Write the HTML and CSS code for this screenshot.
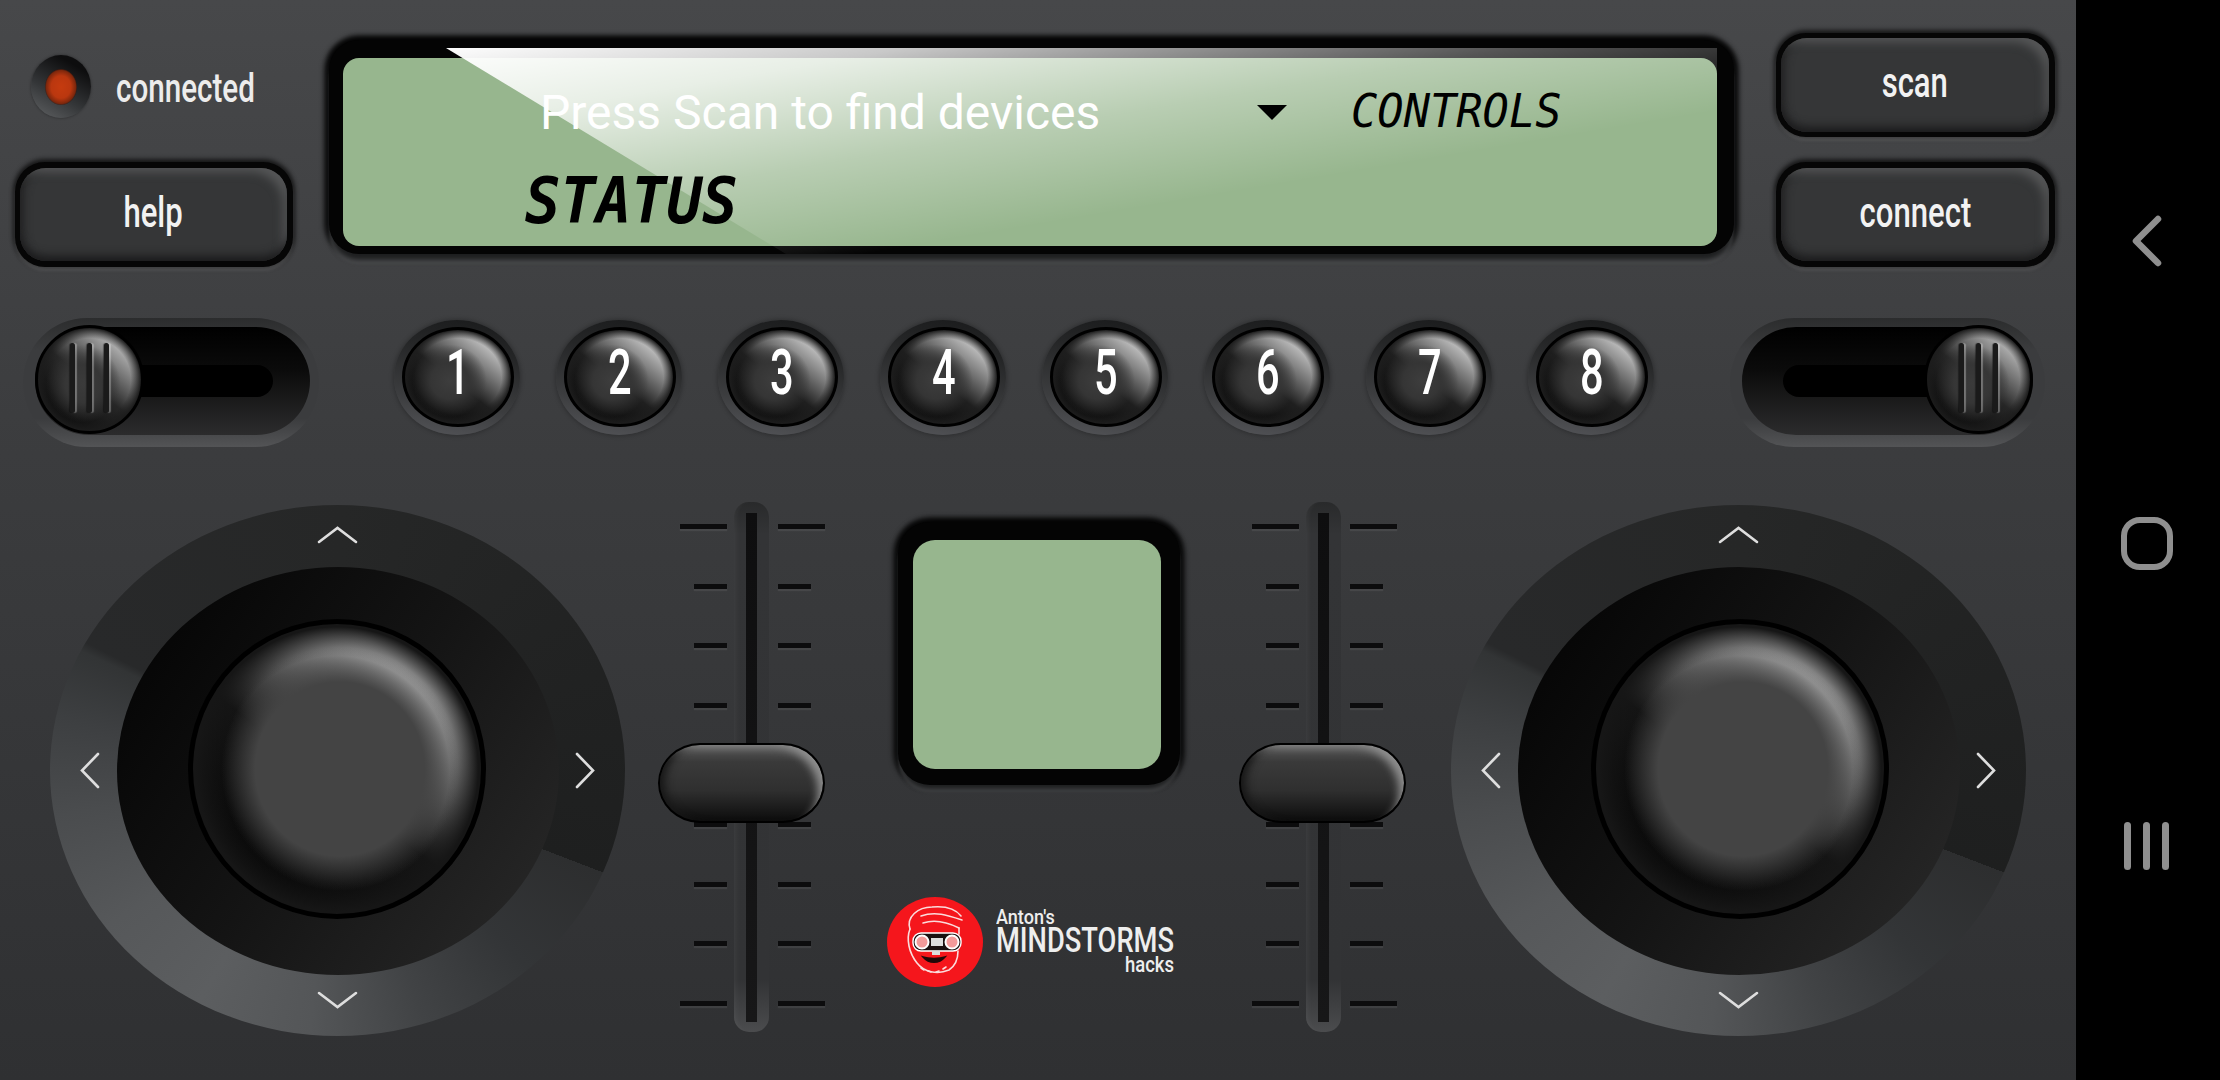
FILE: index.html
```html
<!DOCTYPE html>
<html lang="en">
<head>
<meta charset="utf-8">
<title>Mindstorms remote</title>
<link rel="stylesheet" href="styles.css">
</head>
<body>
<main class="panel">
  <section class="top-row">
    <div class="side-col left-col">
      <div class="status">
        <span class="led"><span class="led-dot"></span></span>
        <span class="status-text">connected</span>
      </div>
      <div class="well well-tall"><button class="btn"><span class="cond">help</span></button></div>
    </div>
    <div class="lcd">
      <div class="lcd-screen">
        <div class="lcd-row">
          <span class="device">Press Scan to find devices</span>
          <span class="caret"></span>
          <span class="seg-thin">CONTROLS</span>
        </div>
        <div class="seg-bold">STATUS</div>
      </div>
      <div class="glare"></div>
    </div>
    <div class="side-col right-col">
      <div class="well"><button class="btn"><span class="cond">scan</span></button></div>
      <div class="well well-tall"><button class="btn"><span class="cond">connect</span></button></div>
    </div>
  </section>

  <section class="mid-row">
    <div class="toggle toggle-left">
      <div class="toggle-well"><span class="toggle-slot"></span></div>
      <div class="toggle-knob"><i></i><i></i><i></i></div>
    </div>
    <div class="numbers">
      <div class="num-hole"><button class="num"><span class="cond-num">1</span></button></div>
      <div class="num-hole"><button class="num"><span class="cond-num">2</span></button></div>
      <div class="num-hole"><button class="num"><span class="cond-num">3</span></button></div>
      <div class="num-hole"><button class="num"><span class="cond-num">4</span></button></div>
      <div class="num-hole"><button class="num"><span class="cond-num">5</span></button></div>
      <div class="num-hole"><button class="num"><span class="cond-num">6</span></button></div>
      <div class="num-hole"><button class="num"><span class="cond-num">7</span></button></div>
      <div class="num-hole"><button class="num"><span class="cond-num">8</span></button></div>
    </div>
    <div class="toggle toggle-right">
      <div class="toggle-well"><span class="toggle-slot"></span></div>
      <div class="toggle-knob"><i></i><i></i><i></i></div>
    </div>
  </section>

  <section class="bottom-row">
    <div class="joy">
      <svg class="chev chev-up" viewBox="0 0 41 19"><polyline points="2,17 20.5,3 39,17"/></svg>
      <svg class="chev chev-down" viewBox="0 0 41 19"><polyline points="2,2 20.5,16 39,2"/></svg>
      <svg class="chev chev-left" viewBox="0 0 21 37"><polyline points="19,2 3,18.5 19,35"/></svg>
      <svg class="chev chev-right" viewBox="0 0 21 37"><polyline points="2,2 18,18.5 2,35"/></svg>
      <div class="joy-pit"><div class="joy-knob"></div></div>
    </div>

    <div class="fader fader-left">
      <div class="ticks ticks-l">
        <i class="long"></i><i></i><i></i><i></i><i></i><i></i><i></i><i></i><i class="long"></i>
      </div>
      <div class="groove"><span class="groove-slot"></span></div>
      <div class="ticks ticks-r">
        <i class="long"></i><i></i><i></i><i></i><i></i><i></i><i></i><i></i><i class="long"></i>
      </div>
      <div class="thumb"></div>
    </div>

    <div class="center-col">
      <div class="mini-lcd"><div class="mini-screen"></div></div>
      <div class="logo">
        <div class="logo-badge">
          <svg viewBox="0 0 96 90">
            <g class="face-line">
              <path d="M23 32C19 20 31 10 45 10C56 9 68 11 74 19"/>
              <path d="M34 19C48 14 60 18 75 23"/>
              <path d="M36 26C48 22 60 25 72 31"/>
              <path d="M72 31V37"/>
              <path d="M23 32C19 42 22 56 30 66C37 75 50 78 62 73C68 69 71 62 71 54"/>
            </g>
            <rect class="goggle" x="26" y="36" width="48" height="18" rx="8"/>
            <circle class="eye" cx="35" cy="45" r="6.5"/>
            <circle class="eye" cx="65" cy="45" r="6.5"/>
            <rect class="goggle-mid" x="44" y="41" width="12" height="8"/>
            <rect class="goggle-mid" x="45" y="54" width="8" height="4"/>
            <path class="mouth" d="M36 60C42 67 52 67 58 60C52 62 42 62 36 60Z"/>
            <path class="beard" d="M34 71L37 73M41 74L44 75M49 75L52 74M56 72L59 70"/>
          </svg>
        </div>
        <div class="logo-text">
          <span class="logo-small">Anton's</span>
          <span class="logo-big">MINDSTORMS</span>
          <span class="logo-hacks">hacks</span>
        </div>
      </div>
    </div>

    <div class="fader fader-right">
      <div class="ticks ticks-l">
        <i class="long"></i><i></i><i></i><i></i><i></i><i></i><i></i><i></i><i class="long"></i>
      </div>
      <div class="groove"><span class="groove-slot"></span></div>
      <div class="ticks ticks-r">
        <i class="long"></i><i></i><i></i><i></i><i></i><i></i><i></i><i></i><i class="long"></i>
      </div>
      <div class="thumb"></div>
    </div>

    <div class="joy joy-second">
      <svg class="chev chev-up" viewBox="0 0 41 19"><polyline points="2,17 20.5,3 39,17"/></svg>
      <svg class="chev chev-down" viewBox="0 0 41 19"><polyline points="2,2 20.5,16 39,2"/></svg>
      <svg class="chev chev-left" viewBox="0 0 21 37"><polyline points="19,2 3,18.5 19,35"/></svg>
      <svg class="chev chev-right" viewBox="0 0 21 37"><polyline points="2,2 18,18.5 2,35"/></svg>
      <div class="joy-pit"><div class="joy-knob"></div></div>
    </div>
  </section>
</main>

<nav class="sysnav">
  <svg class="nav-back" viewBox="0 0 30 52"><polyline points="26,4 4,26 26,48"/></svg>
  <span class="nav-home"></span>
  <span class="nav-recents"><i></i><i></i><i></i></span>
</nav>
</body>
</html>
```
FILE: styles.css
```css
* { box-sizing: border-box; }
html, body { margin: 0; padding: 0; }
body {
  width: 2220px;
  height: 1080px;
  display: flex;
  overflow: hidden;
  background: #000;
  font-family: Roboto, "Liberation Sans", sans-serif;
}
button { border: 0; padding: 0; margin: 0; font: inherit; color: inherit; }
i { display: block; }

.panel {
  width: 2076px;
  height: 1080px;
  flex: none;
  display: flex;
  flex-direction: column;
  background: linear-gradient(180deg, #47484a 0, #3b3c3e 42%, #2f3032 100%);
}

/* top row */
.top-row {
  display: flex;
  height: 234px;
  margin-top: 33px;
  padding-left: 15px;
}
.side-col { display: flex; flex-direction: column; flex: none; }
.left-col { width: 278px; justify-content: space-between; }
.right-col { width: 279px; margin-left: 42px; gap: 25px; }

.status { display: flex; align-items: flex-start; height: 129px; padding: 22px 0 0 16px; }
.led {
  width: 60px; height: 63px; border-radius: 50%; flex: none;
  display: flex; align-items: center; justify-content: center;
  background: linear-gradient(30deg, #5c5e60 5%, #333537 40%, #0d0d0e 80%);
  box-shadow: 0 0 3px rgba(0,0,0,.4);
}
.led-dot {
  width: 32px; height: 36px; border-radius: 50%;
  background: radial-gradient(closest-side, #c53b0f 0, #ba370f 62%, #7e270c 92%, rgba(60,20,10,.6) 100%);
}
.status-text {
  display: inline-block;
  margin: 12px 0 0 25px;
  width: 143px;
  font-size: 40px;
  font-weight: 500;
  line-height: 44px;
  color: #ececec;
  white-space: nowrap;
  transform: scaleX(.74);
  transform-origin: left center;
}

.well {
  height: 104px;
  padding: 5px 6px 5px 5px;
  border-radius: 30px;
  background: #060606;
  box-shadow: 0 4px 3px rgba(255,255,255,.13), 0 -2px 5px 1px rgba(0,0,0,.45), 0 0 4px 2px rgba(0,0,0,.45);
}
.well-tall { height: 105px; padding: 6px 6px 6px 5px; }
.btn {
  display: flex; align-items: center; justify-content: center;
  width: 100%; height: 100%;
  padding-bottom: 5px;
  border-radius: 26px;
  background: #353637;
  box-shadow:
    inset 0 -10px 10px -5px #1b1b1c,
    inset -10px 10px 10px -6px #555657,
    inset 10px 0 9px -6px #242425;
  color: #f2f2f2;
  font-size: 42px;
  font-weight: 500;
}
.cond { display: inline-block; transform: scaleX(.74); transform-origin: center; white-space: nowrap; }

/* LCD */
.lcd {
  position: relative;
  flex: none;
  width: 1405px;
  height: 214px;
  margin: 7px 0 0 36px;
  padding: 18px 17px 8px 14px;
  border-radius: 30px;
  background: #040404;
  box-shadow: 0 7px 5px -1px #1e1f20, 0 11px 3px -1px #4b4c4e, 0 -4px 5px 1px rgba(0,0,0,.6), -3px 0 5px 2px rgba(0,0,0,.75), 3px 0 5px 2px rgba(0,0,0,.75);
}
.lcd-screen {
  height: 100%;
  border-radius: 16px;
  background: #97b68e;
  display: flex;
  flex-direction: column;
  padding: 27px 0 0 197px;
}
.lcd-row { position: relative; z-index: 1; display: flex; align-items: flex-start; height: 86px; }
.device {
  width: 560px;
  font-size: 48px;
  line-height: 56px;
  color: #fff;
  white-space: nowrap;
}
.caret {
  flex: none;
  margin: 20px 0 0 157px;
  width: 0; height: 0;
  border-left: 15px solid transparent;
  border-right: 15px solid transparent;
  border-top: 15px solid #000;
}
.seg-thin {
  display: inline-block;
  margin: 1px 0 0 64px;
  font-family: "DejaVu Sans Mono", monospace;
  font-style: italic;
  font-size: 47px;
  line-height: 50px;
  color: #000;
  white-space: nowrap;
  transform: scaleX(.93);
  transform-origin: left center;
}
.seg-bold {
  position: relative;
  z-index: 1;
  margin: 0 0 0 -15px;
  font-family: "DejaVu Sans Mono", monospace;
  font-style: italic;
  font-weight: 700;
  font-size: 64px;
  line-height: 60px;
  color: #000;
  white-space: nowrap;
  transform: scaleX(.92);
  transform-origin: left center;
}
.glare {
  position: absolute;
  left: 0; top: 8px;
  width: 1405px; height: 206px;
  clip-path: polygon(117px 0, 457px 206px, 1388px 206px, 1388px 0);
  background: linear-gradient(170.5deg,
    rgba(255,255,255,1) 4%,
    rgba(255,255,255,.78) 22%,
    rgba(255,255,255,.32) 45%,
    rgba(255,255,255,0) 67%);
}

/* middle row */
.mid-row {
  display: flex;
  align-items: flex-start;
  height: 129px;
  margin-top: 51px;
  padding-left: 23px;
}
.toggle {
  position: relative;
  flex: none;
  height: 129px;
  padding-top: 9px;
  border-radius: 64px;
  background: linear-gradient(180deg, #2b2c2d 0, #3b3c3e 25%, #3b3c3e 78%, #535456 100%);
}
.toggle-left { width: 296px; padding-left: 12px; }
.toggle-right { width: 315px; padding-left: 12px; margin-left: 76px; }
.toggle-well {
  height: 108px;
  display: flex;
  align-items: center;
  border-radius: 54px;
  background: linear-gradient(180deg, #000 0, #0b0b0b 40%, #2c2c2d 100%);
}
.toggle-left .toggle-well { width: 275px; padding-left: 50px; }
.toggle-right .toggle-well { width: 291px; padding-left: 41px; }
.toggle-slot { display: block; height: 32px; background: #000; border-radius: 16px; }
.toggle-left .toggle-slot { width: 188px; }
.toggle-right .toggle-slot { width: 180px; }
.toggle-knob {
  position: absolute;
  top: 7px;
  width: 109px; height: 109px;
  display: flex;
  justify-content: center;
  gap: 12px;
  padding-top: 15px;
  border-radius: 50%;
  border: 3px solid #000;
  background:
    radial-gradient(closest-side at 44% 54%, #3b3b3b 0, #363636 40%, rgba(54,54,54,0) 82%),
    radial-gradient(closest-side, rgba(20,20,20,0) 80%, #1c1c1c 100%),
    linear-gradient(40deg, #0b0b0b 15%, #262626 48%, #b8b8b8 82%);
}
.toggle-left .toggle-knob { left: 12px; }
.toggle-right .toggle-knob { left: 194px; }
.toggle-knob i {
  width: 5px;
  height: 70px;
  border-radius: 3px;
  background: #1a1a1a;
  box-shadow: 2px 0 1px rgba(255,255,255,.3), -1px 0 1px rgba(0,0,0,.4);
}

.numbers {
  flex: none;
  display: grid;
  grid-template-columns: repeat(8, 126px);
  column-gap: 36px;
  margin: 2px 0 0 75px;
}
.num-hole {
  width: 126px; height: 115px;
  padding: 7px 6px 8px 8px;
  border-radius: 50%;
  background: linear-gradient(190deg, #191a1b 0, #252627 30%, #3c3d3f 70%, #55565a 100%);
  box-shadow: 0 0 4px 1px rgba(0,0,0,.25);
}
.num {
  display: flex; align-items: center; justify-content: center;
  width: 112px; height: 100px;
  padding-bottom: 8px;
  border-radius: 50%;
  border: 3px solid #000;
  background:
    radial-gradient(closest-side at 42% 54%, #3d3d3d 0, #353535 42%, rgba(53,53,53,0) 84%),
    radial-gradient(closest-side, rgba(20,20,20,0) 82%, #1d1d1d 100%),
    linear-gradient(38deg, #0b0b0b 15%, #1f1f1f 46%, #c4c4c4 82%);
  color: #fff;
  font-size: 63px;
  font-weight: 500;
  line-height: 62px;
}
.cond-num { display: inline-block; transform: scaleX(.66); transform-origin: center; }

/* bottom row */
.bottom-row {
  display: flex;
  align-items: flex-start;
  height: 534px;
  margin-top: 55px;
  padding-left: 50px;
}
.joy {
  position: relative;
  flex: none;
  width: 575px; height: 531px;
  margin-top: 3px;
  border-radius: 50%;
  display: flex;
  align-items: center;
  justify-content: center;
  background: conic-gradient(from 111deg,
    #2d2e2f 0deg, #333537 25deg, #414345 50deg, #545658 75deg, #5c5e60 100deg,
    #56585a 125deg, #4a4c4e 150deg, #3d3f41 170deg, #323435 184deg,
    #28292a 186deg, #262727 250deg, #1e1f1f 360deg);
}
.joy-second { margin-left: 54px; }
.joy-pit {
  width: 442px; height: 408px;
  border-radius: 50%;
  display: flex;
  align-items: center;
  justify-content: center;
  background: linear-gradient(125deg, #060606 12%, #141414 50%, #262626 90%);
}
.joy-knob {
  width: 298px; height: 300px;
  margin: -4px 0 0 -2px;
  border-radius: 50%;
  border: 5px solid #000;
  background:
    radial-gradient(closest-side at 51% 50%, #444 0, #444 60%, rgba(68,68,68,0) 84%),
    radial-gradient(closest-side, rgba(20,20,20,0) 78%, #161616 98%),
    linear-gradient(38deg, #060606 14%, #141414 46%, #b4b4b4 80%);
}
.joy-second .joy-knob { margin-left: 2px; }
.chev { position: absolute; fill: none; overflow: visible; }
.chev polyline {
  fill: none;
  stroke: #dedede;
  stroke-width: 2.6;
  stroke-linecap: round;
  stroke-linejoin: miter;
}
.chev-up { width: 41px; height: 19px; left: 267px; top: 20px; }
.chev-down { width: 41px; height: 19px; left: 267px; top: 486px; }
.chev-left { width: 21px; height: 37px; left: 29px; top: 247px; }
.chev-right { width: 21px; height: 37px; left: 525px; top: 247px; }

.fader {
  position: relative;
  flex: none;
  display: flex;
  width: 145px;
  height: 530px;
}
.fader-left { margin-left: 55px; }
.fader-right { margin-left: 66px; }
.ticks {
  width: 47px;
  height: 100%;
  display: flex;
  flex-direction: column;
  justify-content: space-between;
  padding: 22px 0 26px;
}
.ticks-l { align-items: flex-end; }
.ticks-r { align-items: flex-start; }
.ticks i {
  width: 33px; height: 5px;
  background: #0c0c0d;
  box-shadow: 0 2px 1px rgba(255,255,255,.07);
}
.ticks i.long { width: 47px; }
.groove {
  flex: none;
  width: 35px;
  height: 100%;
  margin: 0 9px 0 7px;
  padding: 11px 12px 10px 12px;
  border-radius: 15px;
  background: linear-gradient(180deg, #292a2b 0, #333436 6%, #323335 90%, #4b4c4e 100%);
  box-shadow: inset 8px 0 5px -6px rgba(255,255,255,.05);
}
.groove-slot {
  display: block;
  width: 11px;
  height: 100%;
  background: linear-gradient(180deg, #0e0e0f, #171718);
}
.thumb {
  position: absolute;
  top: 241px;
  width: 167px; height: 80px;
  border-radius: 42px / 40px;
  border: 2px solid #000;
  background: linear-gradient(180deg, #5a5a5a 0, #3a3a3a 22%, #2f2f2f 60%, #0c0c0c 100%);
  box-shadow: inset -11px 8px 9px -6px #8f8f8f, inset 10px 0 9px -5px #171717;
}
.fader-left .thumb { left: -22px; }
.fader-right .thumb { left: -13px; }

.center-col {
  flex: none;
  width: 296px;
  margin-left: 65px;
  padding-top: 20px;
}
.mini-lcd {
  width: 282px; height: 263px;
  margin-left: 8px;
  padding: 18px 19px 16px 15px;
  border-radius: 32px;
  background: #040404;
  box-shadow: 0 5px 4px -1px #1f2021, 0 8px 3px -1px #454648, 0 -4px 5px 1px rgba(0,0,0,.6), -3px 0 5px 2px rgba(0,0,0,.7), 3px 0 5px 2px rgba(0,0,0,.7);
}
.mini-screen { height: 100%; border-radius: 22px; background: #97b68e; }

.logo {
  display: flex;
  align-items: flex-start;
  margin: 112px 0 0 -3px;
}
.logo-badge {
  flex: none;
  width: 96px; height: 90px;
  border-radius: 50%;
  background: #f5161c;
}
.logo-badge svg { display: block; width: 96px; height: 90px; }
.face-line path, .beard { fill: none; stroke: #fbdcdc; stroke-width: 1.6; stroke-linecap: round; }
.goggle { fill: #1a1010; stroke: #fff; stroke-width: 1.4; }
.eye { fill: #f39a9a; stroke: #fff; stroke-width: 2; }
.goggle-mid { fill: #ddd; }
.mouth { fill: #200808; stroke: #200808; stroke-width: 1.5; }
.logo-text {
  flex: none;
  width: 178px;
  margin: 10px 0 0 13px;
  display: flex;
  flex-direction: column;
  color: #eee;
  font-weight: 500;
  white-space: nowrap;
}
.logo-small {
  font-size: 21px; line-height: 20px;
  transform: scaleX(.86); transform-origin: left center;
}
.logo-big {
  font-size: 35px; line-height: 28px;
  transform: scaleX(.78); transform-origin: left center;
}
.logo-hacks {
  font-size: 22px; line-height: 20px;
  text-align: right;
  transform: scaleX(.84); transform-origin: right center;
}

/* system navigation */
.sysnav {
  position: relative;
  flex: 1;
  display: flex;
  flex-direction: column;
  align-items: center;
  padding-top: 215px;
  background: #000;
}
.nav-back { display: block; width: 30px; height: 52px; margin-left: -3px; }
.nav-back polyline {
  fill: none; stroke: #8f8f8f; stroke-width: 6.5;
  stroke-linecap: round; stroke-linejoin: round;
}
.nav-home {
  display: block;
  width: 52px; height: 53px;
  margin-top: 250px;
  margin-left: -2px;
  border: 6.5px solid #8f8f8f;
  border-radius: 19px;
}
.nav-recents {
  display: flex;
  gap: 12px;
  margin-top: 252px;
  margin-left: -3px;
}
.nav-recents i { width: 7px; height: 48px; border-radius: 4px; background: #8f8f8f; }
```
